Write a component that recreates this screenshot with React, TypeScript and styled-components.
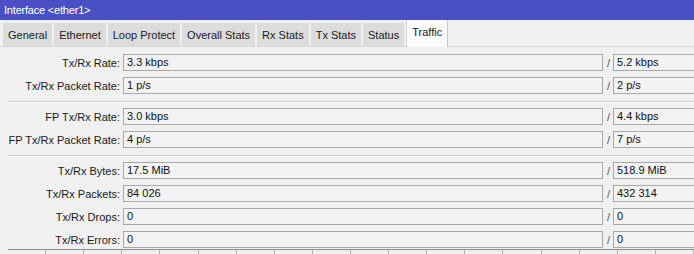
import styled, { createGlobalStyle } from 'styled-components';

const GlobalStyle = createGlobalStyle`
  html, body {
    margin: 0;
    padding: 0;
    background: #f0f0f0;
  }
  body {
    font-family: "Liberation Sans", Arial, sans-serif;
    font-size: 11px;
    color: #1a1a1a;
  }
`;

const StyledWindow = styled.div`
  width: 694px;
  height: 254px;
  overflow: hidden;
  background: #f0f0f0;
  display: flex;
  flex-direction: column;
`;

const StyledTitleBar = styled.div`
  height: 20px;
  line-height: 21px;
  padding-left: 4px;
  background: #4a4fc6;
  color: #ffffff;
  font-size: 11px;
  letter-spacing: -0.2px;
  white-space: nowrap;
`;

const StyledTabStrip = styled.div`
  height: 27px;
  display: flex;
  align-items: flex-end;
  gap: 2px;
  padding-left: 3px;
  border-bottom: 1px solid #d6d6d6;
`;

const StyledTab = styled.div<{ $active?: boolean }>`
  height: ${({ $active }) => ($active ? '27px' : '23px')};
  line-height: ${({ $active }) => ($active ? '25px' : '24px')};
  margin-bottom: ${({ $active }) => ($active ? '-1px' : '0')};
  padding: 0 5px;
  box-sizing: border-box;
  background: ${({ $active }) => ($active ? '#fbfbfb' : '#dcdcdc')};
  border-left: ${({ $active }) => ($active ? '1px solid #d0d0d0' : 'none')};
  border-right: ${({ $active }) => ($active ? '1px solid #c8c8c8' : 'none')};
  color: #1a1a1a;
  white-space: nowrap;
`;

const StyledForm = styled.div`
  padding-top: 7px;
  display: flex;
  flex-direction: column;
`;

const StyledGroup = styled.div`
  display: flex;
  flex-direction: column;
  gap: 6px;
`;

const StyledSeparator = styled.div`
  margin: 7px 0 5px 8px;
  height: 1px;
  width: 1000px;
  border-top: 1px solid #cbcbcb;
  background: #ffffff;
`;

const StyledRow = styled.div`
  display: grid;
  grid-template-columns: 123px 480px 10px 480px;
  align-items: center;
  height: 17px;
`;

const StyledLabel = styled.div`
  text-align: right;
  padding-right: 3px;
  white-space: nowrap;
  color: #1a1a1a;
`;

const StyledField = styled.div`
  height: 17px;
  box-sizing: border-box;
  border: 1px solid #a8a8a8;
  background: #f2f2f2;
  padding-left: 3px;
  line-height: 15px;
  color: #111111;
  white-space: nowrap;
`;

const StyledSlash = styled.div`
  text-align: center;
  color: #555555;
  padding-left: 1px;
`;

const StyledFooter = styled.div`
  margin-top: 1px;
  margin-left: 8px;
  height: 4px;
  border-top: 1px solid #8c8c8c;
  display: flex;
`;

const StyledFooterCell = styled.div`
  width: 38px;
  border-right: 1px solid #b4b4b4;
`;

const tabs = [
  'General',
  'Ethernet',
  'Loop Protect',
  'Overall Stats',
  'Rx Stats',
  'Tx Stats',
  'Status',
  'Traffic',
];

type Stat = { label: string; tx: string; rx: string };

const groups: Stat[][] = [
  [
    { label: 'Tx/Rx Rate:', tx: '3.3 kbps', rx: '5.2 kbps' },
    { label: 'Tx/Rx Packet Rate:', tx: '1 p/s', rx: '2 p/s' },
  ],
  [
    { label: 'FP Tx/Rx Rate:', tx: '3.0 kbps', rx: '4.4 kbps' },
    { label: 'FP Tx/Rx Packet Rate:', tx: '4 p/s', rx: '7 p/s' },
  ],
  [
    { label: 'Tx/Rx Bytes:', tx: '17.5 MiB', rx: '518.9 MiB' },
    { label: 'Tx/Rx Packets:', tx: '84 026', rx: '432 314' },
    { label: 'Tx/Rx Drops:', tx: '0', rx: '0' },
    { label: 'Tx/Rx Errors:', tx: '0', rx: '0' },
  ],
];

const App = () => {
  return (
    <>
      <GlobalStyle />
      <StyledWindow>
        <StyledTitleBar>Interface &lt;ether1&gt;</StyledTitleBar>
        <StyledTabStrip>
          {tabs.map((tab) => (
            <StyledTab key={tab} $active={tab === 'Traffic'}>
              {tab}
            </StyledTab>
          ))}
        </StyledTabStrip>
        <StyledForm>
          {groups.map((group, i) => (
            <div key={i}>
              {i > 0 && <StyledSeparator />}
              <StyledGroup>
                {group.map((stat) => (
                  <StyledRow key={stat.label}>
                    <StyledLabel>{stat.label}</StyledLabel>
                    <StyledField>{stat.tx}</StyledField>
                    <StyledSlash>/</StyledSlash>
                    <StyledField>{stat.rx}</StyledField>
                  </StyledRow>
                ))}
              </StyledGroup>
            </div>
          ))}
          <StyledFooter>
            {Array.from({ length: 18 }).map((_, i) => (
              <StyledFooterCell key={i} />
            ))}
          </StyledFooter>
        </StyledForm>
      </StyledWindow>
    </>
  );
};

export default App;
